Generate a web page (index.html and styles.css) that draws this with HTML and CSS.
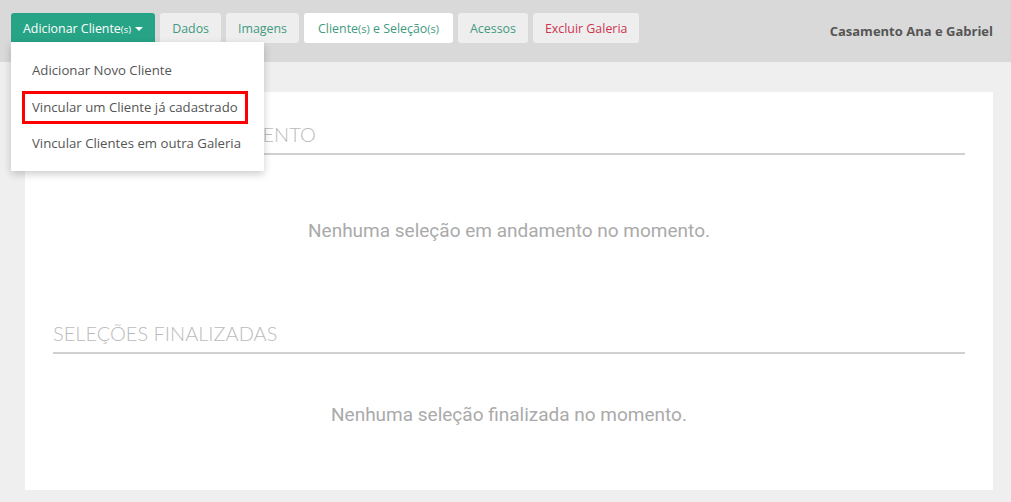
FILE: index.html
```html
<!DOCTYPE html>
<html lang="pt-BR">
<head>
 <meta charset="UTF-8">
 <title>Casamento Ana e Gabriel</title>
 <link rel="stylesheet" href="styles.css">
</head>
<body>

  <div class="topo">
   <div class="abas">
    <div class="aba-menu">
     <button class="aba aba-verde">Adicionar Cliente<small>(s)</small> <span class="seta"></span></button>
     <ul class="dropdown">
      <li><a href="#">Adicionar Novo Cliente</a></li>
      <li><a href="#"><span class="destaque">Vincular um Cliente já cadastrado</span></a></li>
      <li><a href="#">Vincular Clientes em outra Galeria</a></li>
     </ul>
    </div>
    <button class="aba">Dados</button>
    <button class="aba">Imagens</button>
    <button class="aba ativa">Cliente<small>(s)</small> e Seleção<small>(s)</small></button>
    <button class="aba">Acessos</button>
    <button class="aba aba-excluir">Excluir Galeria</button>
   </div>
   <div class="titulo">Casamento Ana e Gabriel</div>
  </div>

  <div class="conteudo">
   <div class="painel">
    <h2>Seleções em andamento</h2>
    <p class="vazio primeiro">Nenhuma seleção em andamento no momento.</p>

    <h2>Seleções finalizadas</h2>
    <p class="vazio segundo">Nenhuma seleção finalizada no momento.</p>
   </div>
  </div>

</body>
</html>
```

FILE: styles.css
```css
 * {
   box-sizing: border-box;
  }

 body {
   font-family: "Open Sans", Arial, sans-serif;
   margin: 0;
   background-color: #efefef;
   height: 502px;
   overflow: hidden;
  }

  .topo {
   display: flex;
   justify-content: space-between;
   align-items: flex-start;
   height: 62px;
   padding: 13px 18px 0 11px;
   background-color: #d9d9d9;
  }

  .abas {
   display: flex;
   gap: 5px;
  }

  .aba-menu {
   position: relative;
  }

  .aba {
   height: 30px;
   padding: 0 12px;
   border: none;
   border-radius: 3px;
   background-color: #eeeeee;
   color: #3f9a80;
   font-family: "Open Sans", Arial, sans-serif;
   font-size: 12.4px;
   cursor: pointer;
  }

  .aba small {
   font-size: 11px;
  }

  .aba-verde {
   background-color: #27a386;
   color: #fff;
   border-radius: 3px 3px 0 0;
  }

  .aba-verde small {
   font-size: 9.5px;
  }

  .seta {
   display: inline-block;
   width: 0;
   height: 0;
   margin-left: 1px;
   vertical-align: middle;
   border-left: 4px solid transparent;
   border-right: 4px solid transparent;
   border-top: 4px solid #fff;
  }

  .ativa {
   padding: 0 14px;
   background-color: #fff;
  }

  .aba-excluir {
   color: #cf3350;
  }

  .dropdown {
   position: absolute;
   top: 29px;
   left: 0;
   z-index: 10;
   width: 253px;
   margin: 0;
   padding: 10px 0 9px;
   list-style: none;
   background: #fff;
   box-shadow: 0 3px 8px rgba(0,0,0,0.2);
  }

  .dropdown li a {
   display: block;
   padding: 0 21px;
   line-height: 36px;
   font-size: 13.2px;
   color: #555;
   text-decoration: none;
   white-space: nowrap;
  }

  .dropdown li:last-child a {
   line-height: 38px;
  }

  .destaque {
   display: inline-block;
   margin-left: -10px;
   padding: 0 7px;
   line-height: 27px;
   vertical-align: middle;
   border: 3px solid #f00;
  }

  .titulo {
   margin-top: 9px;
   font-size: 13px;
   font-weight: bold;
   color: #555;
  }

  .conteudo {
   padding: 30px 18px 0 25px;
  }

  .painel {
   height: 398px;
   padding: 30px 28px 0;
   background: #fff;
  }

  h2 {
   margin: 0;
   padding-bottom: 7px;
   border-bottom: 2px solid #d0d0d0;
   font-family: Lato, sans-serif;
   font-weight: 300;
   font-size: 20px;
   line-height: 24px;
   text-transform: uppercase;
   color: #bbb;
  }

  .vazio {
   margin: 0;
   text-align: center;
   font-family: Roboto, sans-serif;
   font-size: 19px;
   line-height: 24px;
   color: #aaa;
  }

  .primeiro {
   margin: 64px 0 78px;
  }

  .segundo {
   margin-top: 49px;
  }
```
